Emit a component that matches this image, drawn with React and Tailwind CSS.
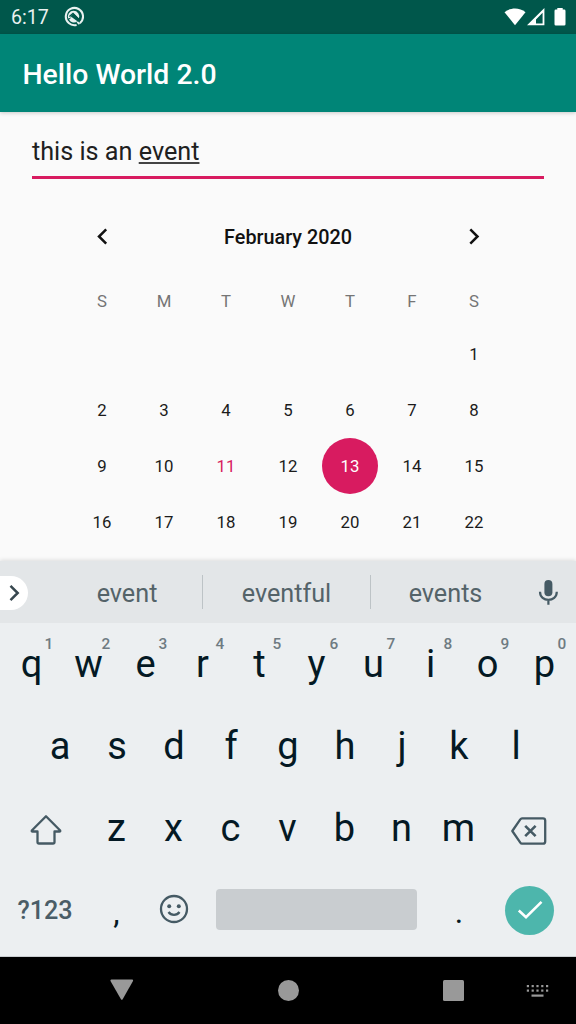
const weekdays = ["S", "M", "T", "W", "T", "F", "S"];
const days = [null, null, null, null, null, null, ...Array.from({ length: 22 }, (_, i) => i + 1)];
const topRow = ["q", "w", "e", "r", "t", "y", "u", "i", "o", "p"];
const homeRow = ["a", "s", "d", "f", "g", "h", "j", "k", "l"];
const bottomRow = ["z", "x", "c", "v", "b", "n", "m"];

function StatusBar() {
  return (
    <div className="flex h-[34px] shrink-0 items-center bg-[#00574b] pr-[10.500px] pl-[11px] text-white">
      <span className="pt-[2px] text-[19.6px] leading-[34px] text-[#e9f1f0]">6:17</span>
      <svg className="mb-[1px] ml-[14.500px]" width="21" height="21" viewBox="0 0 21 21" fill="none">
        <path d="M16.900 17.200A8.600 8.600 0 1 0 13.600 18.900" stroke="#e9f1f0" strokeWidth="2.100" />
        <path d="M5.200 12.500A5.700 5.700 0 1 1 15.900 12.500L10.600 7.500L7.500 10.300L14.400 15.300A5.700 5.700 0 0 1 6 13.800L8.600 11.200Z" fill="#e9f1f0" />
        <path d="M6.400 10.600L10 7.400L16.500 13.900" stroke="#00574b" strokeWidth="1.400" />
        <path d="M14.200 15.900L16.500 18.200" stroke="#e9f1f0" strokeWidth="1.800" />
      </svg>
      <div className="mb-[1px] ml-auto flex items-center">
        <svg width="22" height="20" viewBox="0 0 22 20" fill="#fff">
          <path d="M.5 5.200C6.500 .2 15.500 .2 21.500 5.200L11 18.200Z" />
        </svg>
        <svg className="ml-[1px]" width="18" height="20" viewBox="0 0 18 20">
          <path fillRule="evenodd" fill="#fff" d="M0 18.300L17.400 1V18.300ZM9 16.600H15.600V5.800L9 12.400Z" />
        </svg>
        <svg className="ml-[9px]" width="12" height="20" viewBox="0 0 12 20" fill="#fff">
          <path d="M3.300 1H8.700V2.600H10.200Q11.500 2.600 11.500 3.900V17.200Q11.500 18.500 10.200 18.500H1.800Q.5 18.500 .5 17.200V3.900Q.5 2.600 1.800 2.600H3.300Z" />
        </svg>
      </div>
    </div>
  );
}

function Calendar() {
  return (
    <section className="mx-auto w-[434px]">
      <div className="flex h-[56px] items-center justify-between px-[25px] text-[#111]">
        <svg width="12" height="18" viewBox="0 0 12 18" fill="none" stroke="currentColor" strokeWidth="2.500">
          <path d="M10.200 2.300L3 9.500L10.200 16.700" />
        </svg>
        <h2 className="pt-[3px] text-[19.800px] font-medium">February 2020</h2>
        <svg width="12" height="18" viewBox="0 0 12 18" fill="none" stroke="currentColor" strokeWidth="2.500">
          <path d="M2.300 2.300L9.500 9.500L2.300 16.700" />
        </svg>
      </div>
      <div className="grid h-[62px] grid-cols-7 pt-[9px] text-center text-[16.8px] leading-[56px] text-[#757575]">
        {weekdays.map((d, i) => <span key={i}>{d}</span>)}
      </div>
      <div className="grid grid-cols-7 text-center text-[16.8px] leading-[56px] text-[#1b1b1b]">
        {days.map((d, i) => (
          <span
            key={i}
            className={
              d === 13
                ? "mx-auto size-[56px] rounded-full bg-[#d81b60] text-white"
                : d === 11
                  ? "h-[56px] text-[#d81b60]"
                  : "h-[56px]"
            }
          >
            {d}
          </span>
        ))}
      </div>
    </section>
  );
}

function Letter({ children, hint }) {
  return (
    <span className="relative flex h-full w-[57px] items-center justify-center text-[38px] text-[#041924]">
      {children}
      {hint && <span className="absolute top-[12px] left-[41.500px] text-[15.4px] leading-[18px] font-medium text-[#6f7b82]">{hint}</span>}
    </span>
  );
}

function Punctuation({ children }) {
  return (
    <span className="flex h-full w-[57px] items-center justify-center pt-[5px] text-[32px] text-[#041924]">
      {children}
    </span>
  );
}

function Suggestions() {
  return (
    <div className="flex h-[62px] items-center bg-[#e3e6e8] text-[25.2px] text-[#546369]">
      <div className="mt-px flex h-[34px] w-[28px] items-center rounded-r-full bg-white">
        <svg className="ml-[8px]" width="14" height="18" viewBox="0 0 14 18" fill="none" stroke="#37474f" strokeWidth="2.500">
          <path d="M2.500 1.800L9.700 9L2.500 16.200" />
        </svg>
      </div>
      <span className="ml-[24px] w-[150px] pt-[3px] text-center">event</span>
      <span className="h-[34px] w-px bg-[#bdc3c6]" />
      <span className="w-[167px] pt-[3px] text-center">eventful</span>
      <span className="h-[34px] w-px bg-[#bdc3c6]" />
      <span className="w-[149px] pt-[3px] text-center">events</span>
      <svg className="ml-[18px]" width="20" height="27" viewBox="0 0 20 27" fill="none">
        <rect x="6.400" y="1" width="8" height="16.200" rx="4" fill="#455a64" />
        <path d="M2 12.800C2 23.600 18.800 23.600 18.800 12.800M10.400 20.800V25.800" stroke="#455a64" strokeWidth="2.200" />
      </svg>
    </div>
  );
}

function Keyboard() {
  return (
    <section className="flex h-[396px] shrink-0 flex-col border-b border-[#c9cdd0] bg-[#eceff1] shadow-[0_-1px_4px_rgba(0,0,0,0.12)]">
      <Suggestions />
      <div className="flex h-[82px] justify-center">
        {topRow.map((k, i) => <Letter key={k} hint={String((i + 1) % 10)}>{k}</Letter>)}
      </div>
      <div className="flex h-[82px] justify-center">
        {homeRow.map((k) => <Letter key={k}>{k}</Letter>)}
      </div>
      <div className="flex h-[82px] items-center">
        <div className="flex w-[88px] justify-center pt-[4px] pl-[3px]">
          <svg width="34" height="34" viewBox="0 0 34 34" fill="none" stroke="#455a64" strokeWidth="2.300" strokeLinejoin="round">
            <path d="M17 3.200L31.200 17.500Q31.500 18.500 30.500 18.500H25.500V29Q25.500 30.500 24 30.500H10Q8.500 30.500 8.500 29V18.500H3.500Q2.500 18.500 2.800 17.500Z" />
          </svg>
        </div>
        {bottomRow.map((k) => <Letter key={k}>{k}</Letter>)}
        <div className="flex flex-1 justify-center pt-[6px] pr-[5px]">
          <svg width="38" height="30" viewBox="0 0 38 30" fill="none" stroke="#455a64" strokeWidth="2.300" strokeLinejoin="round">
            <path d="M12 2.300H33Q35.200 2.300 35.200 4.500V25.500Q35.200 27.700 33 27.700H12Q11 27.700 10.300 26.600L2.300 15L10.300 3.400Q11 2.300 12 2.300Z" />
            <path d="M15.200 9.800L25.600 20.200M25.600 9.800L15.200 20.200" strokeWidth="2.600" />
          </svg>
        </div>
      </div>
      <div className="flex h-[80px] items-center">
        <span className="w-[88px] pt-[3px] pl-[2px] text-center text-[25.2px] font-medium text-[#4a5d67]">?123</span>
        <Punctuation>,</Punctuation>
        <div className="flex w-[57px] justify-center">
          <svg width="30" height="30" viewBox="0 0 30 30" fill="none" stroke="#455a64" strokeWidth="2.300">
            <circle cx="15" cy="15" r="13" />
            <circle cx="10.200" cy="12.300" r="2" fill="#455a64" stroke="none" />
            <circle cx="19.800" cy="12.300" r="2" fill="#455a64" stroke="none" />
            <path d="M9.500 18Q11.500 20.800 15 20.800Q18.500 20.800 20.500 18" />
          </svg>
        </div>
        <div className="ml-[14px] h-[41px] w-[200.500px] rounded-[4px] bg-[#c9cdd0]" />
        <div className="ml-[14px] h-full"><Punctuation>.</Punctuation></div>
        <div className="mt-[2px] ml-[17.500px] flex size-[49px] items-center justify-center rounded-full bg-[#4db6ac]">
          <svg width="26" height="20" viewBox="0 0 26 20" fill="none" stroke="#fff" strokeWidth="2.600">
            <path d="M1.800 10.500L9 17.200L24.500 1.800" />
          </svg>
        </div>
      </div>
    </section>
  );
}

function NavigationBar() {
  return (
    <nav className="flex h-[67px] shrink-0 items-center bg-black text-[#999]">
      <svg className="mb-[2px] ml-[110px]" width="24" height="22" viewBox="0 0 24 22" fill="currentColor">
        <path d="M1.300 .5H22.300Q23.500 .8 23 1.900L12.500 20.400Q11.800 21.300 11.100 20.400L.5 1.900Q0 .8 1.300 .5Z" />
      </svg>
      <span className="ml-[143.500px] size-[21px] rounded-full bg-[#999]" />
      <span className="ml-[144.500px] size-[21px] rounded-[1.500px] bg-[#999]" />
      <svg className="ml-[62px]" width="23" height="14" viewBox="0 0 23 14" fill="currentColor">
        {[0, 1, 2, 3, 4].map((c) => (
          <g key={c}>
            <rect x={0.8 + c * 4.8} y="1" width="2.200" height="2.200" />
            <rect x={0.8 + c * 4.8} y="5.500" width="2.200" height="2.200" />
          </g>
        ))}
        <rect x="5.500" y="10.500" width="12" height="2.200" />
      </svg>
    </nav>
  );
}

export default function App() {
  return (
    <div className="flex h-[1024px] w-[576px] flex-col overflow-hidden bg-[#fafafa] font-[Roboto,sans-serif]">
      <StatusBar />
      <header className="flex h-[78px] shrink-0 items-center bg-[#008577] pt-[4px] pl-[22.400px] text-[28.400px] font-medium text-white shadow-[0_1px_4px_rgba(0,0,0,0.2)]">
        Hello World 2.0
      </header>
      <main className="h-[449px] shrink-0 overflow-hidden pt-[17px]">
        <div className="mx-[32px] mb-[29px] h-[50px] border-b-[3px] border-[#d81b60] text-[25.2px] leading-[46px] text-[#202020]">
          this is an <span className="underline decoration-[#444] decoration-[1.500px] underline-offset-[2px]">event</span>
        </div>
        <Calendar />
      </main>
      <Keyboard />
      <NavigationBar />
    </div>
  );
}
